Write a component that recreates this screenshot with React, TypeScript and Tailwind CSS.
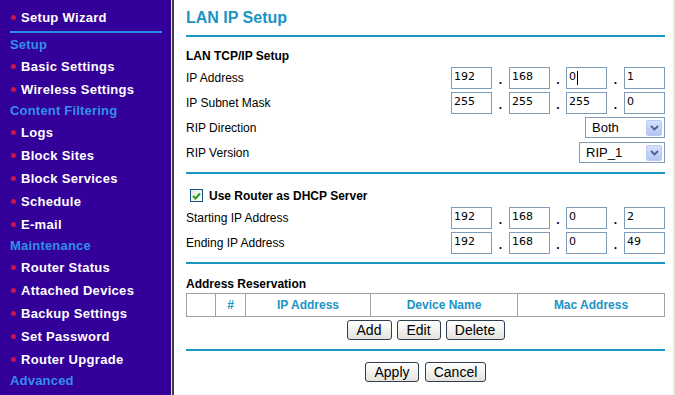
import React from 'react';

const font = { fontFamily: '"Liberation Sans", Arial, sans-serif' };

type NavEntry = { kind: 'head' | 'item'; label: string };

const nav: NavEntry[] = [
  { kind: 'head', label: 'Setup' },
  { kind: 'item', label: 'Basic Settings' },
  { kind: 'item', label: 'Wireless Settings' },
  { kind: 'head', label: 'Content Filtering' },
  { kind: 'item', label: 'Logs' },
  { kind: 'item', label: 'Block Sites' },
  { kind: 'item', label: 'Block Services' },
  { kind: 'item', label: 'Schedule' },
  { kind: 'item', label: 'E-mail' },
  { kind: 'head', label: 'Maintenance' },
  { kind: 'item', label: 'Router Status' },
  { kind: 'item', label: 'Attached Devices' },
  { kind: 'item', label: 'Backup Settings' },
  { kind: 'item', label: 'Set Password' },
  { kind: 'item', label: 'Router Upgrade' },
  { kind: 'head', label: 'Advanced' },
];

const NavItem: React.FC<{ label: string }> = ({ label }) => (
  <div className="h-[23px] flex items-center pl-[11px] gap-[5px] text-white font-bold text-[13px] tracking-[0.3px]">
    <span className="w-[5px] h-[5px] rounded-full bg-[#d0104a]" />
    <span>{label}</span>
  </div>
);

const Sidebar = () => (
  <div className="w-[171px] bg-[#330099] pt-[6px] shrink-0 overflow-hidden">
    <NavItem label="Setup Wizard" />
    <div className="mt-[2px] ml-[10px] w-[152px] h-[2px] bg-[#2f8ae6]" />
    <div className="mt-[2px]">
      {nav.map((n) =>
        n.kind === 'head' ? (
          <div key={n.label} className="h-[20px] flex items-center pl-[10px] font-bold text-[13px] tracking-[0.2px] text-[#3190ea]">
            {n.label}
          </div>
        ) : (
          <NavItem key={n.label} label={n.label} />
        )
      )}
    </div>
  </div>
);

const Box: React.FC<{ value: string; caret?: boolean }> = ({ value, caret }) => (
  <div
    className="w-[41px] h-[22px] border border-[#7f9db9] bg-white flex items-center pl-[2px] text-[11px] text-black"
    style={{ fontFamily: '"DejaVu Sans", Verdana, sans-serif' }}
  >
    {value}
    {caret && <span className="w-px h-[14px] bg-black ml-[1px]" />}
  </div>
);

const Dot: React.FC<{ w: string }> = ({ w }) => (
  <span className={`${w} flex items-end justify-center pb-[3px] text-[12px] font-bold leading-none`}>.</span>
);

const IpFields: React.FC<{ parts: string[]; caretAt?: number }> = ({ parts, caretAt }) => (
  <div className="flex h-[22px]">
    <Box value={parts[0]} caret={caretAt === 0} />
    <Dot w="w-[17px]" />
    <Box value={parts[1]} caret={caretAt === 1} />
    <Dot w="w-[16px]" />
    <Box value={parts[2]} caret={caretAt === 2} />
    <Dot w="w-[17px]" />
    <Box value={parts[3]} caret={caretAt === 3} />
  </div>
);

const Chevron = () => (
  <svg width="9" height="6" viewBox="0 0 9 6">
    <path d="M1 1 L4.5 4.5 L8 1" fill="none" stroke="#4d6185" strokeWidth="1.8" />
  </svg>
);

const Select: React.FC<{ value: string; width: string }> = ({ value, width }) => (
  <div className={`${width} h-[21px] border border-[#7f9db9] bg-white flex items-center justify-between pl-[6px] pr-[2px] text-[13px] text-black`}>
    <span>{value}</span>
    <span className="w-[16px] h-[16px] rounded-[2px] border border-[#b9c9ef] bg-gradient-to-b from-[#d6e1fd] to-[#b1c5f5] flex items-center justify-center">
      <Chevron />
    </span>
  </div>
);

const Row: React.FC<{ label: string; children: React.ReactNode }> = ({ label, children }) => (
  <div className="h-[25px] flex items-center justify-between text-[12px] text-black">
    <span>{label}</span>
    {children}
  </div>
);

const Btn: React.FC<{ label: string; w: string }> = ({ label, w }) => (
  <button className={`${w} h-[20px] rounded-[3px] border border-[#2f3d50] bg-gradient-to-b from-white to-[#e4e3dc] text-[14px] text-black leading-none flex items-center justify-center`}>
    {label}
  </button>
);

const Rule = ({ mt }: { mt: string }) => <div className={`${mt} h-[2px] bg-[#1a96c6]`} />;

export default function App() {
  return (
    <div className="w-[675px] h-[395px] flex overflow-hidden bg-white" style={font}>
      <Sidebar />
      <div className="w-px bg-[#e8e4d4]" />
      <div className="w-[2px] bg-[#404040]" />
      <div className="flex-1 pl-[12px] pr-[8px] pt-[9px] border-r-2 border-[#ece9d8]">
        <div className="h-[18px] flex items-center text-[16px] font-bold text-[#1a94c4]">LAN IP Setup</div>
        <Rule mt="mt-[8px]" />

        <div className="mt-[11px] h-[16px] flex items-center text-[12px] font-bold">LAN TCP/IP Setup</div>
        <div className="mt-[1px]">
          <Row label="IP Address">
            <IpFields parts={['192', '168', '0', '1']} caretAt={2} />
          </Row>
          <Row label="IP Subnet Mask">
            <IpFields parts={['255', '255', '255', '0']} />
          </Row>
          <Row label="RIP Direction">
            <Select value="Both" width="w-[80px]" />
          </Row>
          <Row label="RIP Version">
            <Select value="RIP_1" width="w-[86px]" />
          </Row>
        </div>
        <Rule mt="mt-[7px]" />

        <div className="mt-[12px] h-[19px] flex items-center gap-[6px] pl-[4px] text-[12px] font-bold">
          <span className="w-[13px] h-[13px] border border-[#1c5180] bg-gradient-to-br from-[#e6e6e0] to-white flex items-center justify-center">
            <svg width="9" height="8" viewBox="0 0 9 8">
              <path d="M1 4 L3.5 6.5 L8 1.5" fill="none" stroke="#21a121" strokeWidth="2" />
            </svg>
          </span>
          <span>Use Router as DHCP Server</span>
        </div>
        <Row label="Starting IP Address">
          <IpFields parts={['192', '168', '0', '2']} />
        </Row>
        <Row label="Ending IP Address">
          <IpFields parts={['192', '168', '0', '49']} />
        </Row>
        <Rule mt="mt-[7px]" />

        <div className="mt-[12px] h-[16px] flex items-center text-[12px] font-bold">Address Reservation</div>
        <table className="mt-[1px] w-full border-collapse border border-[#a0a0a0] text-[12px] font-bold text-[#1a94c4]">
          <thead>
            <tr className="h-[23px]">
              <th className="w-[29px] border border-[#a0a0a0]" />
              <th className="w-[30px] border border-[#a0a0a0]">#</th>
              <th className="w-[125px] border border-[#a0a0a0]">IP Address</th>
              <th className="w-[147px] border border-[#a0a0a0]">Device Name</th>
              <th className="border border-[#a0a0a0]">Mac Address</th>
            </tr>
          </thead>
        </table>
        <div className="mt-[3px] flex justify-center gap-[5px]">
          <Btn label="Add" w="w-[45px]" />
          <Btn label="Edit" w="w-[44px]" />
          <Btn label="Delete" w="w-[59px]" />
        </div>
        <Rule mt="mt-[9px]" />
        <div className="mt-[11px] flex justify-center gap-[6px]">
          <Btn label="Apply" w="w-[54px]" />
          <Btn label="Cancel" w="w-[61px]" />
        </div>
      </div>
    </div>
  );
}
